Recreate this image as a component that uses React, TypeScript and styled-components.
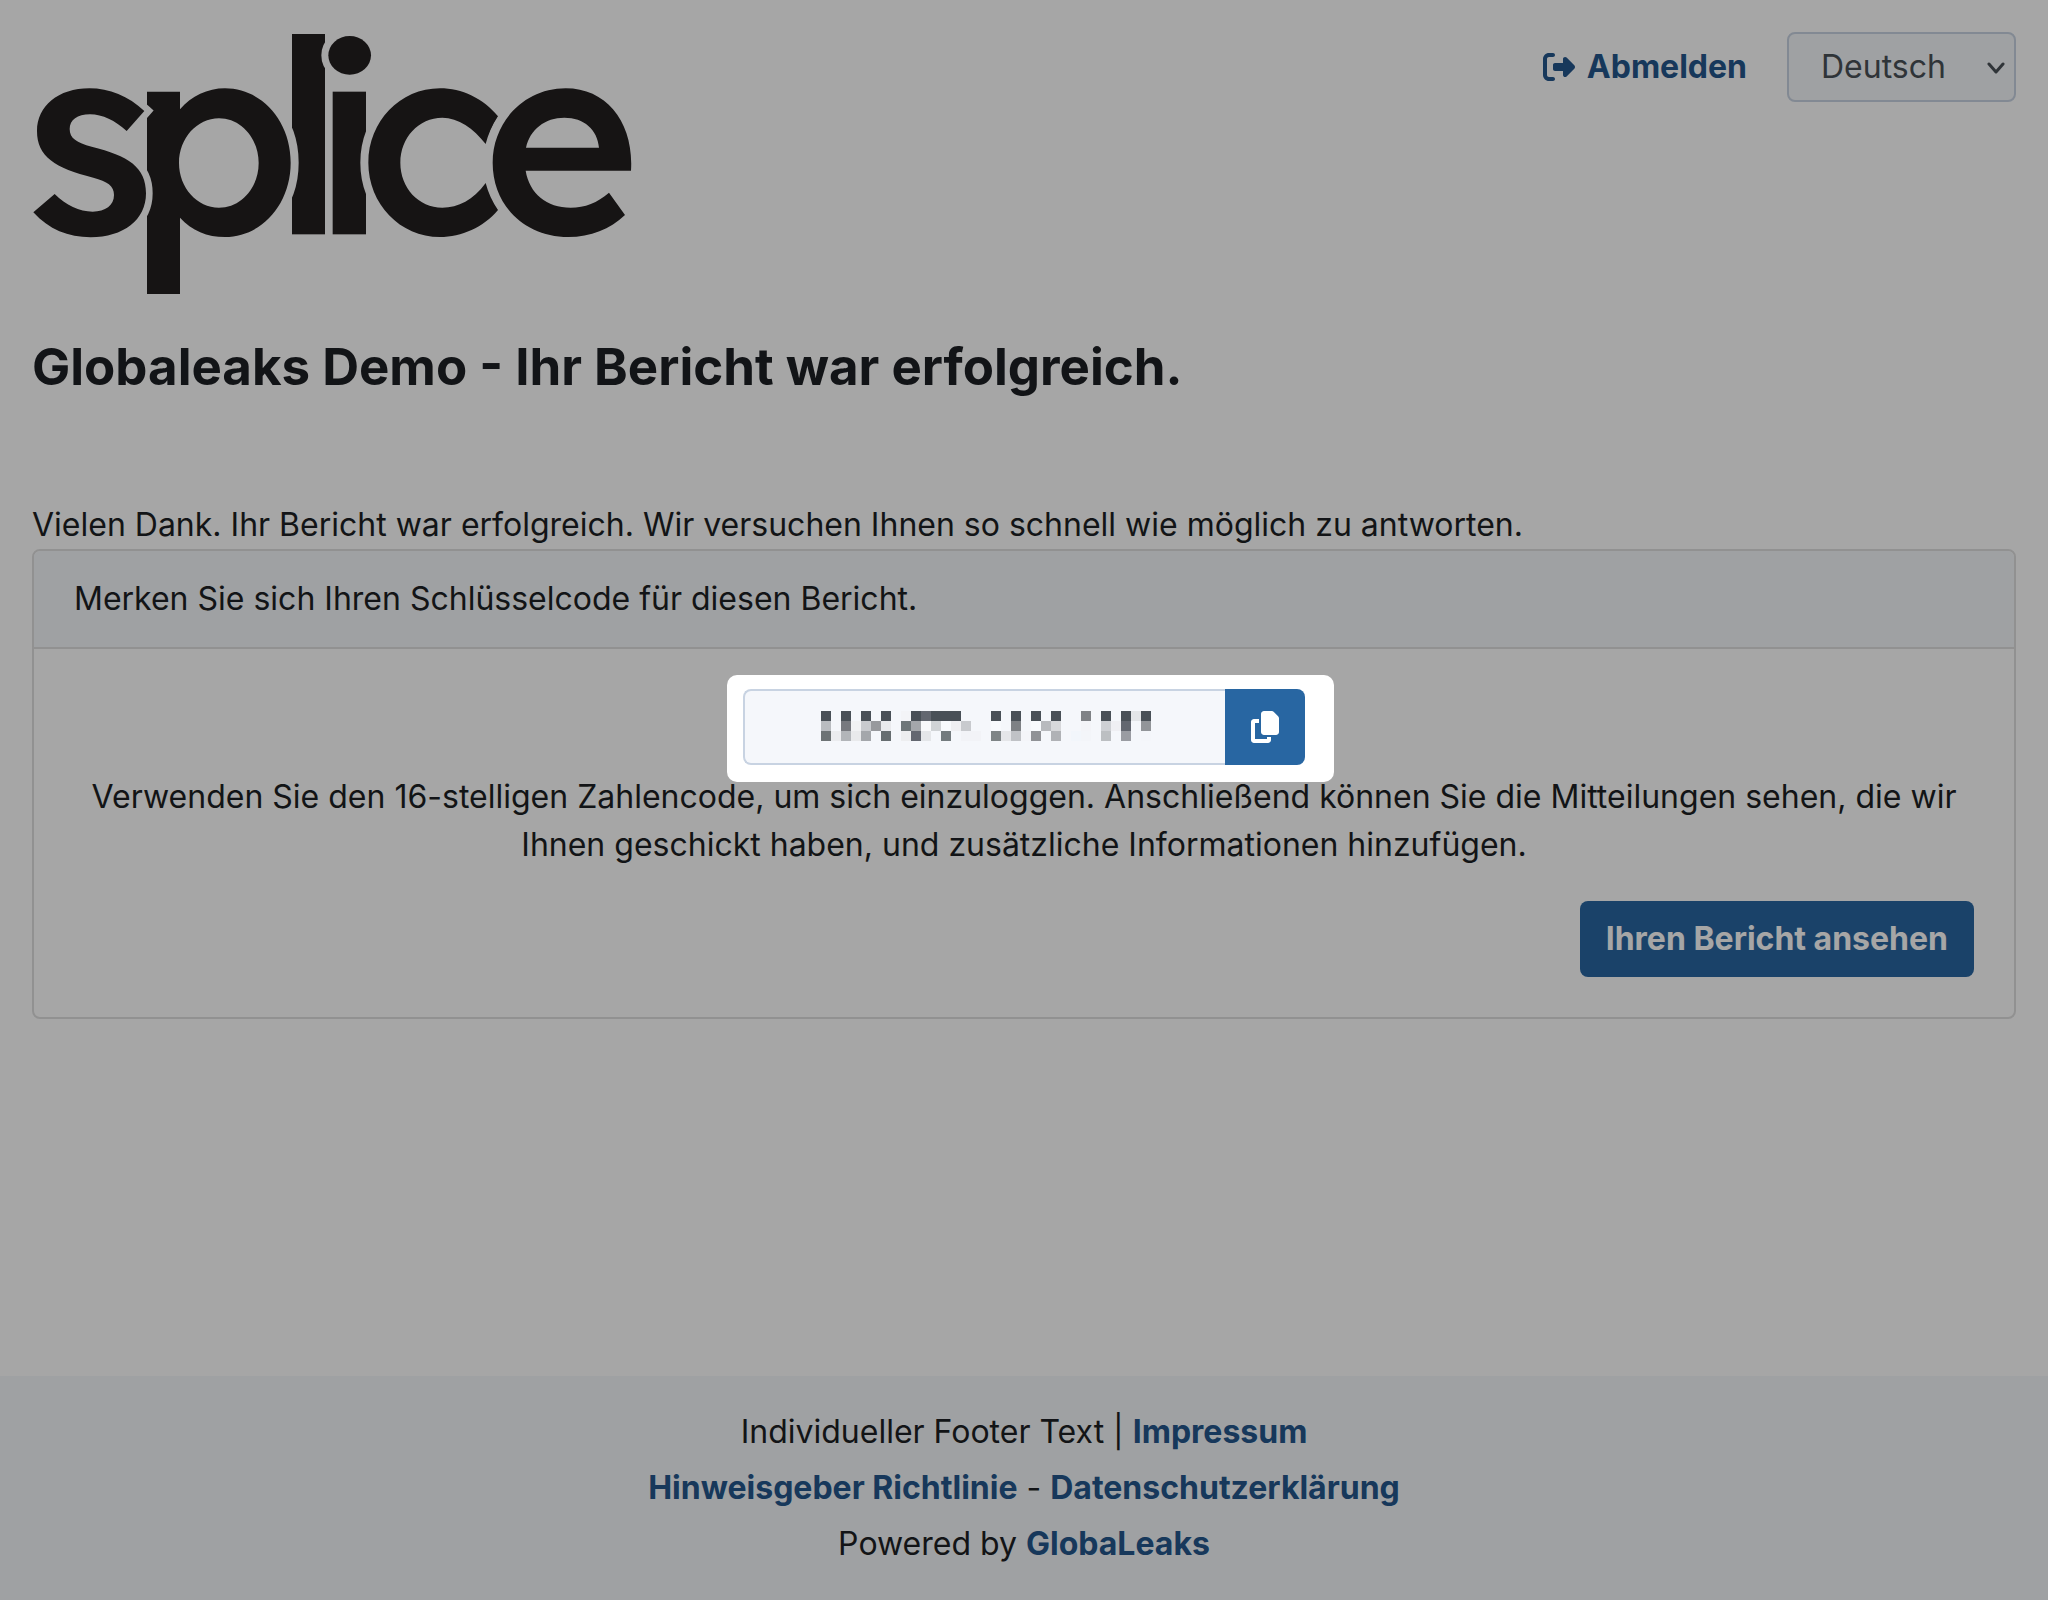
import React from "react";
import styled, { createGlobalStyle } from "styled-components";
import { FaCopy, FaRightFromBracket } from "react-icons/fa6";

const color = {
  text: "#1d1f24",
  muted: "#495057",
  link: "#24568c",
  primary: "#2866a2",
  surface: "#f5f7fa",
  field: "#f5f7fb",
  fieldBorder: "#c8d3e2",
  border: "#dfdfdf",
  brand: "#231f20",
};

const GlobalStyle = createGlobalStyle`
  *, *::before, *::after { box-sizing: border-box; }
  body {
    margin: 0;
    background: #fff;
    color: ${color.text};
    font: 400 32px/48px Inter, "Liberation Sans", sans-serif;
  }
`;

const Page = styled.div`
  display: flex;
  flex-direction: column;
  min-height: 100vh;
  overflow: hidden;
`;

const Header = styled.header`
  display: flex;
  justify-content: space-between;
  align-items: flex-start;
  padding: 32px 32px 0;
`;

const Logo = styled.svg`
  display: block;
  width: 600px;
  height: 264px;
  fill: ${color.brand};
  fill-rule: evenodd;
  stroke: #fff;
  paint-order: stroke;
`;

const Actions = styled.div`
  display: flex;
  align-items: center;
  gap: 40px;
`;

const Link = styled.a`
  color: ${color.link};
  font-weight: 700;
  text-decoration: none;
`;

const LogoutLink = styled(Link)`
  display: flex;
  align-items: center;
  gap: 12px;
`;

const SelectBox = styled.div`
  position: relative;
`;

const Select = styled.select`
  display: block;
  appearance: none;
  width: 229px;
  height: 70px;
  padding: 0 48px 0 32px;
  border: 2px solid ${color.fieldBorder};
  border-radius: 8px;
  background: ${color.surface};
  color: ${color.muted};
  font: inherit;
`;

const Chevron = styled.svg`
  position: absolute;
  right: 11px;
  top: 30px;
  width: 18px;
  height: 12px;
  fill: none;
  stroke: ${color.muted};
  stroke-width: 3;
  stroke-linecap: round;
  stroke-linejoin: round;
  pointer-events: none;
`;

const Main = styled.main`
  flex: 1;
  padding: 40px 32px;
`;

const Title = styled.h1`
  margin: 0 0 103px;
  font-size: 51px;
  line-height: 62px;
  font-weight: 700;
`;

const Intro = styled.p`
  margin: 0;
`;

const Card = styled.section`
  border: 2px solid ${color.border};
  border-radius: 8px;
`;

const CardHeader = styled.div`
  padding: 24px 40px;
  border-bottom: 2px solid ${color.border};
  border-radius: 6px 6px 0 0;
  background: ${color.surface};
`;

const CardBody = styled.div`
  display: flex;
  flex-direction: column;
  padding: 40px;
`;

const CodeGroup = styled.div`
  position: relative;
  display: flex;
  align-self: center;
  margin-bottom: 8px;
`;

/* Lit area of the guided tour; its spread shadow dims the rest of the page. */
const Spotlight = styled.div`
  position: absolute;
  inset: -14px -29px -17px -16px;
  border-radius: 10px;
  box-shadow: 0 0 0 4000px rgba(0, 0, 0, 0.35);
  background: #fff;
  pointer-events: none;
`;

const CodeField = styled.div`
  position: relative;
`;

const CodeInput = styled.input`
  display: block;
  width: 482px;
  height: 76px;
  padding: 0 24px;
  border: 2px solid ${color.fieldBorder};
  border-right: 0;
  border-radius: 8px 0 0 8px;
  background: ${color.field};
  color: ${color.muted};
  font: inherit;
  text-align: center;
`;

const Mosaic = styled.svg`
  position: absolute;
  left: 78px;
  top: 22px;
  width: 330px;
  height: 30px;
  pointer-events: none;
`;

const Button = styled.button`
  display: flex;
  align-items: center;
  justify-content: center;
  height: 76px;
  padding: 0 26px;
  border: 0;
  border-radius: 8px;
  background: ${color.primary};
  color: #fff;
  font: inherit;
  font-weight: 700;
`;

const CopyButton = styled(Button)`
  position: relative;
  width: 80px;
  padding: 0;
  border-radius: 0 8px 8px 0;
`;

const ViewButton = styled(Button)`
  align-self: flex-end;
`;

const Hint = styled.p`
  margin: 0 0 32px;
  text-align: center;
`;

const Footer = styled.footer`
  padding: 28px 32px;
  background: ${color.surface};
  line-height: 56px;
  text-align: center;
`;

const D = "#495057";
const _ = "";

/* Redacted receipt code, one colour per block; empty blocks show the field. */
const blocks: string[][] = [
  [D, _, D, _, D, _, D, _, "#f3f4f7", D, "#636770", D, D, D, _, _, _, D, _, D, _, D, _, D, _, _, "#7f8286", _, D, _, D, "#e3e5e8", D],
  ["#b9bcc0", _, "#77797f", "#f1f2f4", "#c8cace", "#97999d", "#e9eaed", _, "#6e7679", "#a4a7ab", "#f8f9fb", "#d0d3d6", "#f8fafd", "#efeff2", "#c8cace", _, _, "#f8fafd", _, "#7e8185", _, "#f8fafd", "#b8babe", "#d7d8db", _, _, "#f3f4f8", _, "#ced0d4", "#efeff3", "#636770", _, "#929599"],
  ["#6d7375", "#ebecef", "#b2b5b9", "#e9eaec", "#a4a7ab", _, "#666d70", _, "#edeef0", "#636770", "#e4e6e9", _, "#737b7e", _, "#f2f3f7", "#f2f3f7", _, "#7e8486", "#e5e6e9", "#c0c2c6", "#f4f5f9", "#909296", _, "#b0b2b6", _, "#f2f6fb", "#f3f5f9", _, "#bcbfc2", _, "#9a9ca2", _, "#f4f6fa"],
];

function BrandLogo() {
  return (
    <Logo viewBox="36 36 1800 792" role="img" aria-label="splice">
      <rect x="816" y="42" width="99" height="601" strokeWidth="0" />
      <rect x="938" y="215" width="100" height="428" strokeWidth="0" />
      <ellipse cx="989" cy="106" rx="64" ry="58" strokeWidth="42" />
      <path
        strokeWidth="48"
        d="M381 215H480V268C515 228 562 205 615 205C725 205 812 303 812 428C812 553 725 651 615 651C562 651 515 632 480 593V822H381ZM597 295C531 295 477 355 477 429C477 503 531 563 597 563C663 563 716 503 716 429C716 355 663 295 597 295Z"
      />
      <path
        strokeWidth="40"
        d="M373 273C325 228 268 205 208 205C115 205 51 258 51 333C51 410 105 444 220 473C262 484 282 497 282 525C282 556 256 575 218 575C178 575 138 556 104 522L40 577C86 628 145 652 212 652C310 652 378 600 378 520C378 440 325 408 215 380C170 368 149 355 149 327C149 300 172 283 210 283C248 283 285 302 320 333Z"
      />
      <path
        strokeWidth="48"
        d="M1434 289C1390 235 1325 205 1260 205C1140 205 1045 305 1045 428C1045 551 1140 651 1260 651C1325 651 1390 622 1434 570Q1408 532 1397 489C1360 540 1315 563 1267 563C1196 563 1141 503 1141 428C1141 353 1196 293 1267 293C1315 293 1360 325 1397 372Q1408 329 1434 289Z"
      />
      <path
        strokeWidth="48"
        d="M1833 452C1842 310 1762 205 1637 205C1514 205 1418 305 1418 428C1418 556 1514 651 1645 651C1712 651 1770 628 1815 585L1767 518C1732 548 1695 563 1652 563C1580 563 1528 520 1517 452ZM1518 383C1530 328 1575 293 1633 293C1692 293 1732 328 1737 383Z"
      />
    </Logo>
  );
}

export default function App() {
  return (
    <Page>
      <GlobalStyle />
      <Header>
        <BrandLogo />
        <Actions>
          <LogoutLink href="#logout">
            <FaRightFromBracket size={32} aria-hidden />
            Abmelden
          </LogoutLink>
          <SelectBox>
            <Select aria-label="Sprache" defaultValue="de">
              <option value="de">Deutsch</option>
            </Select>
            <Chevron viewBox="0 0 18 12" aria-hidden>
              <path d="M2 2L9 10L16 2" />
            </Chevron>
          </SelectBox>
        </Actions>
      </Header>
      <Main>
        <Title>Globaleaks Demo - Ihr Bericht war erfolgreich.</Title>
        <Intro>
          Vielen Dank. Ihr Bericht war erfolgreich. Wir versuchen Ihnen so schnell wie möglich zu antworten.
        </Intro>
        <Card>
          <CardHeader>Merken Sie sich Ihren Schlüsselcode für diesen Bericht.</CardHeader>
          <CardBody>
            <CodeGroup>
              <Spotlight />
              <CodeField>
                <CodeInput aria-label="Schlüsselcode" readOnly />
                <Mosaic viewBox="0 0 33 3" shapeRendering="crispEdges" aria-hidden>
                  {blocks.map((row, y) =>
                    row.map((fill, x) =>
                      fill ? <rect key={`${x}-${y}`} x={x} y={y} width="1" height="1" fill={fill} /> : null
                    )
                  )}
                </Mosaic>
              </CodeField>
              <CopyButton type="button" aria-label="Kopieren">
                <FaCopy size={32} aria-hidden />
              </CopyButton>
            </CodeGroup>
            <Hint>
              Verwenden Sie den 16-stelligen Zahlencode, um sich einzuloggen. Anschließend können Sie die
              Mitteilungen sehen, die wir Ihnen geschickt haben, und zusätzliche Informationen hinzufügen.
            </Hint>
            <ViewButton type="button">Ihren Bericht ansehen</ViewButton>
          </CardBody>
        </Card>
      </Main>
      <Footer>
        <div>
          Individueller Footer Text | <Link href="#impressum">Impressum</Link>
        </div>
        <div>
          <Link href="#richtlinie">Hinweisgeber Richtlinie</Link> -{" "}
          <Link href="#datenschutz">Datenschutzerklärung</Link>
        </div>
        <div>
          Powered by <Link href="#globaleaks">GlobaLeaks</Link>
        </div>
      </Footer>
    </Page>
  );
}
